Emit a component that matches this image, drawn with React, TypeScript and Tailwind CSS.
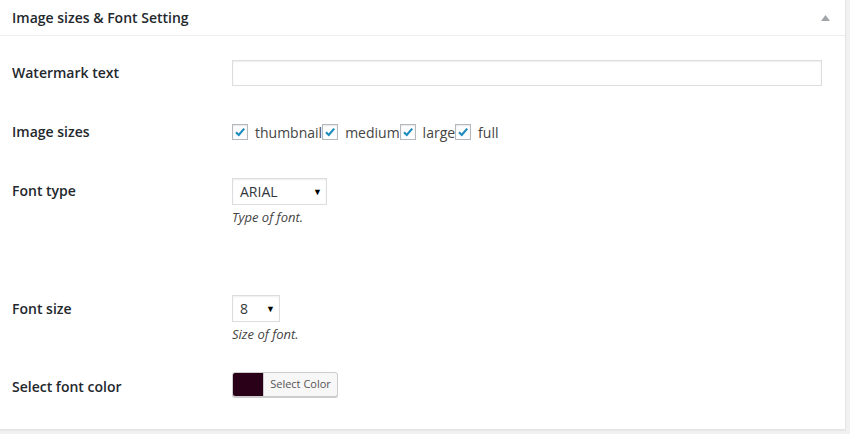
const font = { fontFamily: "'Open Sans', 'Liberation Sans', sans-serif" };

function Check({ label }: { label: string }) {
  return (
    <label className="flex items-center">
      <span className="flex h-[16px] w-[16px] items-center justify-center border border-[#b4b9be] bg-white shadow-[inset_0_1px_2px_rgba(0,0,0,0.1)]">
        <svg width="12" height="12" viewBox="0 0 12 12">
          <path d="M2 6.2 L4.8 9 L10.2 2.6" fill="none" stroke="#1e8cbe" strokeWidth="2.2" />
        </svg>
      </span>
      <span className="ml-[7px] text-[14px] text-[#444]">{label}</span>
    </label>
  );
}

function Select({ value, width }: { value: string; width: string }) {
  return (
    <div
      className={`flex h-[27px] items-center justify-between border border-[#ddd] bg-white pl-[7px] pr-[4px] text-[14px] text-[#32373c] shadow-[inset_0_1px_2px_rgba(0,0,0,0.07)] ${width}`}
    >
      <span>{value}</span>
      <span className="text-[9px] text-black">▼</span>
    </div>
  );
}

type RowProps = { label: string; height: string; labelPt: string; children?: React.ReactNode };

function Row({ label, height, labelPt, children }: RowProps) {
  return (
    <div className={`flex ${height}`}>
      <div className={`w-[220px] text-[14px] font-semibold leading-[18px] text-[#23282d] ${labelPt}`}>{label}</div>
      <div className="flex-1 pt-[15px]">{children}</div>
    </div>
  );
}

export default function App() {
  return (
    <div className="h-[434px] w-[850px] overflow-hidden bg-[#f1f1f1]" style={font}>
      <div className="h-[430px] w-[846px] border-r border-b border-[#e5e5e5] bg-white shadow-[0_1px_1px_rgba(0,0,0,0.04)]">
        <div className="flex h-[36px] items-center justify-between border-b border-[#eee] pl-[12px] pr-[15px]">
          <h2 className="text-[14px] font-semibold text-[#23282d]">Image sizes &amp; Font Setting</h2>
          <svg width="9" height="6" viewBox="0 0 9 6">
            <path d="M0 6 L4.5 0 L9 6 Z" fill="#a0a5aa" />
          </svg>
        </div>
        <div className="pl-[12px] pt-[9px]">
          <Row label="Watermark text" height="h-[56px]" labelPt="pt-[19px]">
            <div className="h-[26px] w-[590px] border border-[#ddd] bg-white shadow-[inset_0_1px_2px_rgba(0,0,0,0.07)]" />
          </Row>
          <Row label="Image sizes" height="h-[60px]" labelPt="pt-[22px]">
            <div className="flex h-[32px] items-center">
              <Check label="thumbnail" />
              <Check label="medium" />
              <Check label="large" />
              <Check label="full" />
            </div>
          </Row>
          <Row label="Font type" height="h-[118px]" labelPt="pt-[21px]">
            <div className="pt-[2px]">
              <Select value="ARIAL" width="w-[95px]" />
              <p className="mt-[3px] text-[13px] italic text-[#444]">Type of font.</p>
            </div>
          </Row>
          <Row label="Font size" height="h-[78px]" labelPt="pt-[21px]">
            <div className="pt-[1px]">
              <Select value="8" width="w-[48px]" />
              <p className="mt-[3px] text-[13px] italic text-[#444]">Size of font.</p>
            </div>
          </Row>
          <Row label="Select font color" height="h-[60px]" labelPt="pt-[21px]">
            <div className="flex h-[25px] w-[106px] overflow-hidden rounded-[3px] border border-[#ccc] bg-[#f7f7f7] shadow-[0_1px_0_#ccc]">
              <div className="w-[30px] bg-[#2a0018]" />
              <div className="flex flex-1 items-center justify-center border-l border-[#ccc] text-[11px] text-[#555]">
                Select Color
              </div>
            </div>
          </Row>
        </div>
      </div>
    </div>
  );
}
